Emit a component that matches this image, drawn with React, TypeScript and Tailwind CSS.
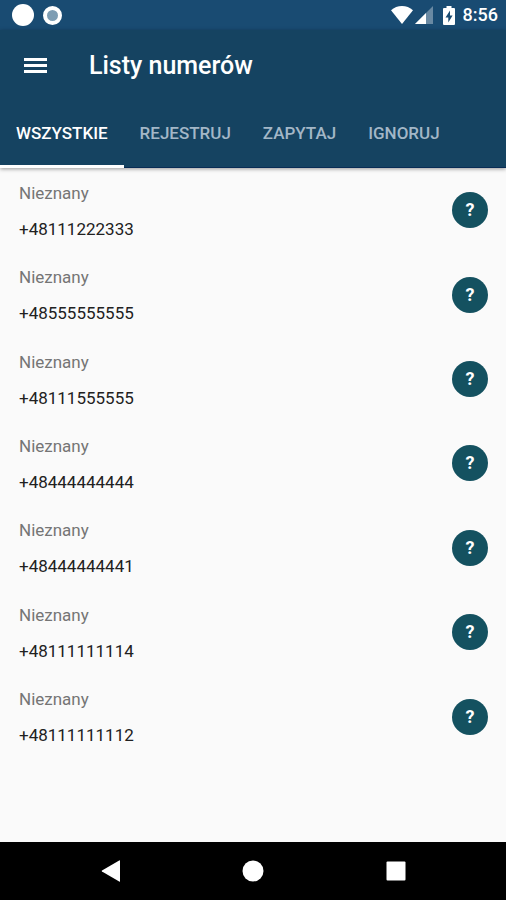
import { useState } from "react";

const tabs = ["WSZYSTKIE", "REJESTRUJ", "ZAPYTAJ", "IGNORUJ"];

const numbers = [
  "+48111222333",
  "+48555555555",
  "+48111555555",
  "+48444444444",
  "+48444444441",
  "+48111111114",
  "+48111111112",
];

function StatusBar() {
  return (
    <div className="flex h-[30px] items-center justify-between bg-[#194b72] pr-2 pl-3 text-white">
      <div className="flex items-center gap-[9px]">
        <span className="size-[22px] rounded-full bg-white" />
        <span className="size-[19px] rounded-full border-4 border-white bg-[#7d9db3]" />
      </div>
      <div className="flex items-center">
        <svg viewBox="0 0 22 18" className="mr-0.5 h-[18px] w-[22px]" fill="currentColor" aria-hidden="true">
          <path d="M11 18 0 4.2C3 1.600 7 0 11 0s8 1.600 11 4.200z" />
        </svg>
        <svg viewBox="0 0 18 18" className="mr-2.5 size-[18px]" fill="currentColor" aria-hidden="true">
          <path d="M18 0v18H0z" opacity=".35" />
          <path d="M11 7v11H0z" />
        </svg>
        <svg viewBox="0 0 12 19" className="mr-2 h-[19px] w-3" aria-hidden="true">
          <path d="M3.500 0h5v2H11q1 0 1 1v15q0 1-1 1H1q-1 0-1-1V3q0-1 1-1h2.500z" fill="white" />
          <path d="M7 4.500 2.500 11.500H5.300V16.500L9.600 9.500H7z" fill="#194b72" />
        </svg>
        <span className="text-lg leading-6 font-medium">8:56</span>
      </div>
    </div>
  );
}

function Header({ active, onSelect }: { active: string; onSelect: (tab: string) => void }) {
  return (
    <header className="relative bg-[#154361] text-white shadow-[0_1px_4px_rgba(0,0,0,0.4)]">
      <div className="flex h-[71px] items-center gap-[42px] px-6">
        <button type="button" aria-label="Menu" className="flex w-[23px] flex-col gap-[3px]">
          <span className="h-[3px] bg-white" />
          <span className="h-[3px] bg-white" />
          <span className="h-[3px] bg-white" />
        </button>
        <h1 className="text-[25px] leading-8 font-medium">Listy numerów</h1>
      </div>
      <nav role="tablist" className="flex h-[67px] border-b border-[#082c55]">
        {tabs.map((tab) => (
          <button
            key={tab}
            type="button"
            role="tab"
            aria-selected={tab === active}
            onClick={() => onSelect(tab)}
            className={`-mb-px border-b-3 px-4 text-[17px] leading-6 font-medium ${
              tab === active ? "border-b-white text-white" : "border-b-transparent text-[#a3b7c7]"
            }`}
          >
            {tab}
          </button>
        ))}
      </nav>
    </header>
  );
}

function NumberRow({ number }: { number: string }) {
  return (
    <li className="flex min-h-20 flex-1 items-center justify-between pr-[18px] pl-[19px]">
      <div className="flex flex-col gap-3 pt-px text-[17px] leading-6">
        <span className="text-[#757575]">Nieznany</span>
        <span className="text-[#212121]">{number}</span>
      </div>
      <button
        type="button"
        aria-label={`Akcja dla ${number}`}
        className="flex size-9 items-center justify-center rounded-full bg-[#145160] text-lg leading-6 font-bold text-white"
      >
        ?
      </button>
    </li>
  );
}

function NavigationBar() {
  return (
    <div className="flex h-[58px] items-center justify-center gap-[121px] bg-black text-white">
      <button type="button" aria-label="Wstecz">
        <svg viewBox="0 0 22 22" className="size-[22px]" fill="currentColor" aria-hidden="true">
          <path d="M21 .8v20.400q0 .8-.8.4L3 11.600q-.8-.6 0-1.200L20.200.4q.8-.4.8.4z" />
        </svg>
      </button>
      <button type="button" aria-label="Ekran główny">
        <svg viewBox="0 0 22 22" className="size-[22px]" fill="currentColor" aria-hidden="true">
          <circle cx="11" cy="11" r="10.500" />
        </svg>
      </button>
      <button type="button" aria-label="Ostatnie aplikacje">
        <svg viewBox="0 0 22 22" className="size-[22px]" fill="currentColor" aria-hidden="true">
          <rect x="1.500" y="1.500" width="19" height="19" rx="1" />
        </svg>
      </button>
    </div>
  );
}

export default function App() {
  const [active, setActive] = useState("WSZYSTKIE");
  return (
    <div className="flex min-h-screen flex-col bg-[#fafafa] font-[Roboto,sans-serif]">
      <StatusBar />
      <Header active={active} onSelect={setActive} />
      <main className="flex flex-1 flex-col pb-[83px]">
        <ul className="flex flex-1 flex-col">
          {numbers.map((number) => (
            <NumberRow key={number} number={number} />
          ))}
        </ul>
      </main>
      <NavigationBar />
    </div>
  );
}
